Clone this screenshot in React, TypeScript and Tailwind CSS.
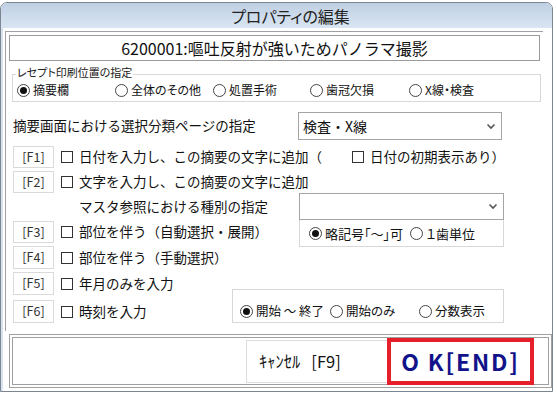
import React from "react";

const FONT = "font-['Noto_Sans_CJK_JP','Noto_Sans',sans-serif]";
const PALT = "[font-feature-settings:'palt']";

function Radio({ checked, label, className = "" }: { checked?: boolean; label: string; className?: string }) {
  return (
    <span className={`flex items-center gap-[3px] ${className}`}>
      <span className="w-[13px] h-[13px] rounded-full border border-[#444] bg-white flex items-center justify-center shrink-0">
        {checked && <span className="w-[7px] h-[7px] rounded-full bg-[#111]" />}
      </span>
      <span className="whitespace-nowrap">{label}</span>
    </span>
  );
}

function Check() {
  return <span className="w-[12px] h-[12px] border border-[#333] bg-white shrink-0" />;
}

function Key({ label }: { label: string }) {
  return (
    <span className="w-[41px] h-full border border-[#dadada] flex items-center justify-center text-[12.5px] text-[#333] shrink-0">
      {label}
    </span>
  );
}

function Chevron() {
  return (
    <svg width="10" height="7" viewBox="0 0 10 7" className="shrink-0">
      <path d="M1.5 1.5 L5 5 L8.5 1.5" fill="none" stroke="#555" strokeWidth="1.6" />
    </svg>
  );
}

function KeyRow({ k, text, className = "" }: { k: string; text: string; className?: string }) {
  return (
    <div className={`flex items-stretch ml-[7px] ${className}`}>
      <Key label={k} />
      <span className="flex items-center gap-[6px] ml-[7px]">
        <Check />
        <span className="whitespace-nowrap">{text}</span>
      </span>
    </div>
  );
}

export default function App() {
  return (
    <div className={`w-[557px] h-[394px] bg-white overflow-hidden ${FONT} text-[#111] leading-none`}>
      {/* Dialog window */}
      <div className="mt-[2px] w-[553px] h-[390px] border border-[#7d8590] rounded-t-[7px] overflow-hidden flex flex-col bg-white">
        {/* Title bar */}
        <div className={`h-[25px] shrink-0 bg-gradient-to-b from-[#bfd0e3] to-[#d9e5f2] flex items-center justify-center pl-[28px] text-[16px] text-[#222] ${PALT}`}>
          プロパティの編集
        </div>

        {/* Body */}
        <div className="flex-1 flex flex-col border-l-[2px] border-[#d6e2ef] text-[13.5px]">
          {/* Content panel */}
          <div className="ml-[2px] mt-[3px] w-[538px] h-[300px] border-t border-l border-[#a0a0a0] flex flex-col">
            {/* Item name */}
            <div className="ml-[3px] mt-[3px] w-[531px] h-[26px] border border-[#9a9a9a] flex items-center justify-center text-[16px] text-[#111]">
              6200001:嘔吐反射が強いためパノラマ撮影
            </div>

            {/* Receipt print position */}
            <div className={`relative ml-[6px] mt-[13px] w-[529px] h-[28px] border border-[#d8d8d8] flex items-center pt-[4px] pl-[4px] text-[12px] ${PALT}`}>
              <span className="absolute -top-[8px] left-[3px] bg-white px-[1px] text-[11px] text-[#222]">
                レセプト印刷位置の指定
              </span>
              <Radio checked label="摘要欄" className="w-[98px]" />
              <Radio label="全体のその他" className="w-[98px]" />
              <Radio label="処置手術" className="w-[97px]" />
              <Radio label="歯冠欠損" className="w-[99px]" />
              <Radio label="X線・検査" />
            </div>

            {/* Page selection */}
            <div className="mt-[10px] h-[28px] flex items-center">
              <span className="ml-[7px] w-[285px] whitespace-nowrap">摘要画面における選択分類ページの指定</span>
              <div className="w-[204px] h-full border border-[#a5a5a5] flex items-center justify-between pl-[4px] pr-[5px] text-[14px]">
                <span>検査・X線</span>
                <Chevron />
              </div>
            </div>

            {/* F1 */}
            <div className="mt-[6px] h-[22px] flex items-stretch">
              <KeyRow k="[F1]" text="日付を入力し、この摘要の文字に追加（" />
              <span className="flex items-center gap-[6px] ml-[30px]">
                <Check />
                <span className="whitespace-nowrap">日付の初期表示あり）</span>
              </span>
            </div>

            {/* F2 */}
            <KeyRow k="[F2]" text="文字を入力し、この摘要の文字に追加" className="mt-[3px] h-[22px]" />

            {/* Master reference + F3 */}
            <div className="flex">
              <div className="w-[293px] flex flex-col">
                <div className="h-[27px] flex items-center pl-[73px] pt-[1px] whitespace-nowrap">
                  マスタ参照における種別の指定
                </div>
                <KeyRow k="[F3]" text="部位を伴う（自動選択・展開）" className="mt-[1px] h-[22px]" />
              </div>
              <div className="flex flex-col">
                <div className="w-[205px] h-[27px] border border-[#a5a5a5] flex items-center justify-end pr-[5px]">
                  <Chevron />
                </div>
                <div className={`w-[205px] h-[27px] border-x border-b border-[#d8d8d8] flex items-center pl-[9px] pt-[1px] text-[13px] ${PALT}`}>
                  <Radio checked label="略記号「～」可" className="w-[101px]" />
                  <Radio label="１歯単位" />
                </div>
              </div>
            </div>

            {/* F4 */}
            <KeyRow k="[F4]" text="部位を伴う（手動選択）" className="-mt-[1px] h-[23px]" />

            {/* F5, F6 + time options */}
            <div className="flex">
              <div className="w-[226px] flex flex-col">
                <KeyRow k="[F5]" text="年月のみを入力" className="mt-[3px] h-[23px]" />
                <KeyRow k="[F6]" text="時刻を入力" className="mt-[5px] h-[23px]" />
              </div>
              <div className={`mt-[20px] w-[272px] h-[34px] border border-[#d8d8d8] flex items-center pl-[7px] pt-[10px] text-[12.5px] ${PALT}`}>
                <Radio checked label="開始 ～ 終了" className="w-[90px]" />
                <Radio label="開始のみ" className="w-[89px]" />
                <Radio label="分数表示" />
              </div>
            </div>
          </div>

          {/* Footer */}
          <div className="ml-[6px] mt-[3px] w-[543px] h-[54px] border border-[#a0a0a0] p-[2px]">
            <div className="h-full border border-[#a0a0a0] flex items-center justify-end pr-[14px]">
              <button className="w-[142px] h-[43px] -mr-[1px] border border-[#dcdcdc] bg-white flex items-center justify-start pl-[12px] text-[16.5px] text-[#111] whitespace-pre">
                ｷｬﾝｾﾙ   [F9]
              </button>
              <button className="w-[147px] h-[47px] border-[4px] border-[#e5202a] bg-white flex items-center justify-center text-[23px] font-bold text-[#12128a] tracking-[1.8px] whitespace-pre">
                O K[END]
              </button>
            </div>
          </div>
        </div>
      </div>
    </div>
  );
}
